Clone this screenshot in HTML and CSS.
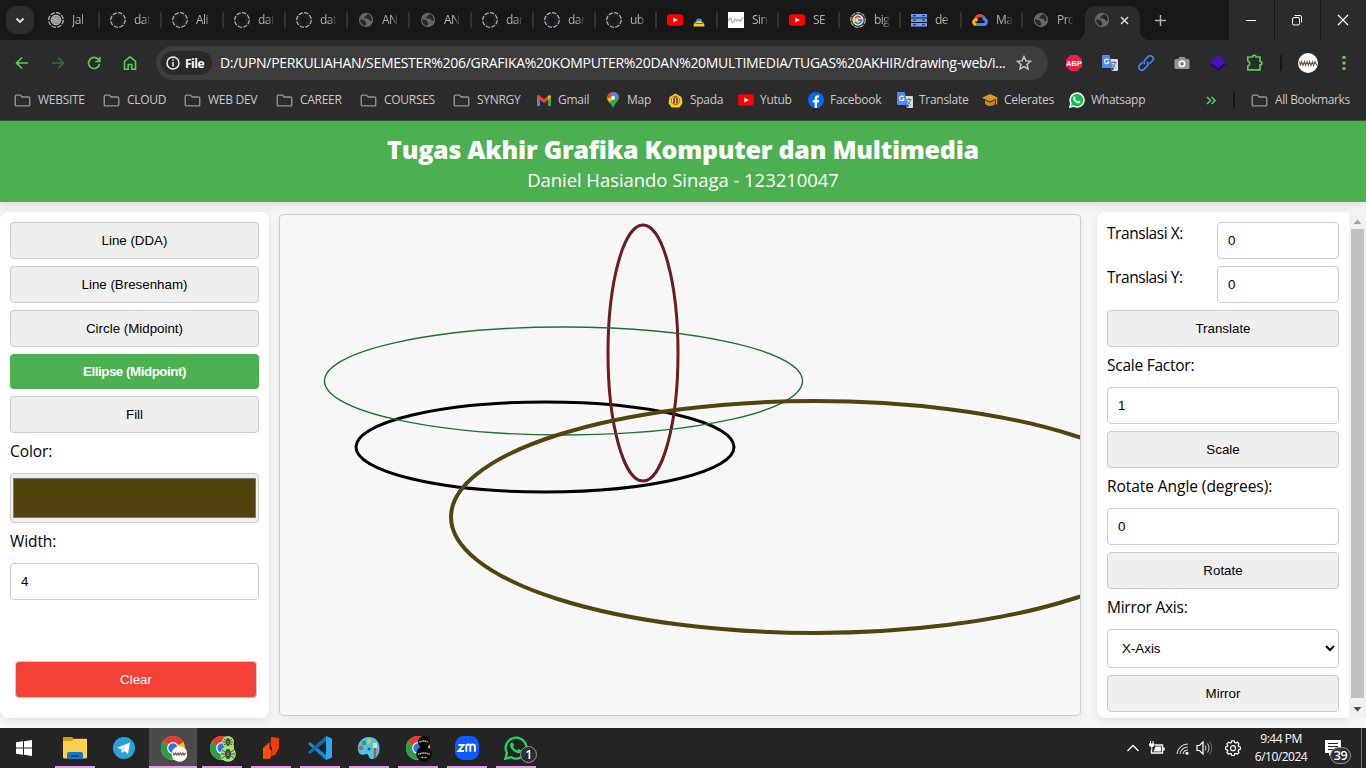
FILE: index.html
```html
<!DOCTYPE html>
<html lang="en">
<head>
<meta charset="utf-8">
<title>Tugas Akhir Grafika Komputer dan Multimedia</title>
<link rel="stylesheet" href="styles.css">
</head>
<body>
<svg class="defs" width="0" height="0">
  <symbol id="github" viewBox="0 0 16 16"><circle cx="8" cy="8" r="7.3" fill="#1d2127" stroke="#a9abae" stroke-width="1.3" stroke-dasharray="4.4 1.3"/><path d="M5 4.5l2 .8h2l2-.8v2.300c1 2-.2 3.600-1.800 4v2.500H6.800v-2.500C5 10.400 4 8.800 5 6.800z" fill="#15171a"/></symbol>
  <symbol id="target" viewBox="0 0 16 16"><circle cx="8" cy="8" r="7.300" fill="#1b1b1b" stroke="#b4b4b4" stroke-width="1.300" stroke-dasharray="4.400 1.300"/><circle cx="8" cy="8" r="4.800" fill="#8c8c8c" stroke="#c4c4c4"/><path d="M5 7l2-2M5 9.500l4.500-4.500M6.500 10.500l4-4M8.500 11l2.500-2.500" stroke="#ccc" stroke-width=".8"/></symbol>
  <symbol id="globe" viewBox="0 0 16 16"><circle cx="8" cy="8" r="7.200" fill="#626569"/><path d="M10.500 2.200C8 2.200 8.500 4 7.200 4.400 5.500 5 6.500 6.300 7.500 6.600c1.600.4 3.300-.2 3.600 1.200.2 1.200 1.500 1 2.700.7C13.700 5.500 12.600 3.200 10.500 2.200zM2 7.500c1.500-.3 3 .2 4.500.9 1.200.6.300 1.800 1.300 2.400.8.500.3 1.700-.3 2.900C4.500 13.500 2.200 11 2 7.500z" fill="#25272a"/></symbol>
  <symbol id="youtube" viewBox="0 0 16 16"><rect y="2.300" width="16" height="11.400" rx="3" fill="#f00"/><path d="M6.300 5.500l4.500 2.500-4.500 2.500z" fill="#fff"/></symbol>
  <symbol id="google" viewBox="0 0 16 16"><circle cx="8" cy="8" r="7.300" fill="#222" stroke="#a9abae" stroke-width="1.200" stroke-dasharray="4.400 1"/><circle cx="8" cy="8" r="5.700" fill="#ddd"/><g fill="none" stroke-width="1.800"><path d="M10.600 5.700A3.500 3.500 0 0 0 5 6.400" stroke="#e94235"/><path d="M5 6.300a3.500 3.500 0 0 0 0 3.400" stroke="#fabb05"/><path d="M5 9.700a3.500 3.500 0 0 0 5.200.9" stroke="#34a853"/><path d="M8 8h3.500c0 1.200-.5 2-1.300 2.600" stroke="#4285f4"/></g></symbol>
  <symbol id="folder" viewBox="0 0 18 14"><path d="M2.500 1.200h4.300l1.900 2h6.800q1.300 0 1.300 1.300v7q0 1.300-1.300 1.300h-13q-1.300 0-1.300-1.300v-9q0-1.300 1.300-1.300z" fill="none" stroke="#929292" stroke-width="1.500"/></symbol>
  <symbol id="translate" viewBox="0 0 16 16"><path d="M7 4h8q1 0 1 1v10q0 1-1 1H10z" fill="#d9dbdd"/><path d="M9.500 7.500h5M12 6v1.500M10 13c2-1.300 3-3 3.300-5M10.500 9c.5 1.500 1.600 3 3.300 4" stroke="#6b7785" fill="none"/><path d="M1 0h6.500l3.500 13H1q-1 0-1-1V1q0-1 1-1z" fill="#4c8bf5"/><path d="M9 13l2 3 1-3z" fill="#2450a8"/><path d="M6.600 5A2.300 2.300 0 1 0 7 7H5" fill="none" stroke="#fff" stroke-width="1.100"/></symbol>
  <symbol id="chrome" viewBox="0 0 24 24"><circle cx="12" cy="12" r="12" fill="#fbc116"/><path d="M12 12L1.600 6A12 12 0 0 1 22.400 6z" fill="#e33b2e"/><path d="M1.600 6A12 12 0 0 0 11 24l5.500-9.500L12 12z" fill="#2b9f48"/><circle cx="12" cy="12" r="5.900" fill="#fff"/><circle cx="12" cy="12" r="4.700" fill="#3474e6"/></symbol>
  <symbol id="whatsapp" viewBox="0 0 24 24"><path d="M1.300 22.700l1.600-5.700A10.400 10.400 0 1 1 7 21.200z" fill="var(--disc)" stroke="var(--rim)" stroke-width="2.300"/><path d="M8 6.500c1.300-.3 1.700 2.300 2 2.900l-.9 1.400c1 1.900 2.300 2.900 4 3.600l1.300-1.500c1 .3 2.500 1 2.700 1.500 0 2.400-2 3-3.500 2.700-3.900-1-6.700-4-7.500-7-.3-1.600.7-3.300 1.900-3.600z" fill="var(--phone)"/></symbol>
</svg>

<div class="browser">
  <div class="tabstrip">
    <div class="tab-search"><svg width="10" height="7" viewBox="0 0 10 7"><path d="M1.500 1.500L5 5l3.500-3.500" fill="none" stroke="#e3e3e3" stroke-width="1.800"/></svg></div>
    <div class="tabs">
      <div class="tab"><svg class="fav"><use href="#target"/></svg><span>Jal</span></div>
      <div class="tab"><svg class="fav"><use href="#github"/></svg><span>dat</span></div>
      <div class="tab"><svg class="fav"><use href="#github"/></svg><span>Ali</span></div>
      <div class="tab"><svg class="fav"><use href="#github"/></svg><span>dat</span></div>
      <div class="tab"><svg class="fav"><use href="#github"/></svg><span>dat</span></div>
      <div class="tab"><svg class="fav"><use href="#globe"/></svg><span>AN</span></div>
      <div class="tab"><svg class="fav"><use href="#globe"/></svg><span>AN</span></div>
      <div class="tab"><svg class="fav"><use href="#github"/></svg><span>dar</span></div>
      <div class="tab"><svg class="fav"><use href="#github"/></svg><span>dar</span></div>
      <div class="tab narrow"><svg class="fav"><use href="#github"/></svg><span>ub</span></div>
      <div class="tab narrow"><svg class="fav"><use href="#youtube"/></svg><svg class="taco" width="12" height="9" viewBox="0 0 12 9"><path d="M3 3Q3 .5 6 .5T9 3z" fill="#28a0dc"/><path d="M.5 8.500Q.5 3 6 3t5.500 5.500z" fill="#f6c945"/><path d="M2 5.500h8" stroke="#2c7c90"/></svg></div>
      <div class="tab narrow"><svg class="fav" viewBox="0 0 16 16"><path fill="#fff" d="M0 0h16v16H0z"/><path d="M.5 9l1-2.500Q3 5 3.500 8.500T6 9.500L7.500 7 9 9l2-1.500 1.500 1.500L15 5.500" fill="none" stroke="#c99" stroke-width="1.200"/></svg><span>Sin</span></div>
      <div class="tab narrow"><svg class="fav"><use href="#youtube"/></svg><span>SE</span></div>
      <div class="tab narrow"><svg class="fav"><use href="#google"/></svg><span>big</span></div>
      <div class="tab narrow"><svg class="fav" viewBox="0 0 16 16"><g fill="#6d9bf5"><path d="M0 2h16v3.500H0zM0 6.500h16V10H0zM0 11h16v3.500H0z"/></g><path d="M2 3.700h3M11 3.700h3M2 8.200h3M11 8.200h3M2 12.700h3M11 12.700h3" stroke="#1e3c80" stroke-width="1.300"/></svg><span>de</span></div>
      <div class="tab narrow"><svg class="fav" viewBox="0 0 16 16"><g fill="none" stroke-width="3"><path d="M3.500 7A4.600 4.600 0 0 1 11 4.800" stroke="#ea4335"/><path d="M11 4.800c1.300 1 1.300 2.400 1.300 2.400 3 .6 2.500 5.300-.6 5.300H8" stroke="#4285f4"/><path d="M8 12.500H4.500" stroke="#34a853"/><path d="M4.500 12.500C1 12.300.8 8.500 3.500 7.600l2 .8" stroke="#fbbc05"/></g></svg><span>Ma</span></div>
      <div class="tab narrow last"><svg class="fav"><use href="#globe"/></svg><span>Pro</span></div>
      <div class="tab active"><svg class="fav"><use href="#globe"/></svg><svg width="9" height="9" viewBox="0 0 9 9"><path d="M1 1l7 7M8 1L1 8" stroke="#d8d8d8" stroke-width="1.600"/></svg></div>
    </div>
    <svg class="plus" width="11" height="11" viewBox="0 0 11 11"><path d="M5.500 0v11M0 5.500h11" stroke="#b0b0b0" stroke-width="1.500"/></svg>
    <div class="window-buttons">
      <div><svg width="12" height="12" viewBox="0 0 12 12"><path d="M1 6.500h10" stroke="#fff"/></svg></div>
      <div><svg width="12" height="12" viewBox="0 0 12 12"><g fill="none" stroke="#fff"><rect x="1.500" y="3.500" width="7" height="7.500" rx="1.500"/><path d="M3.500 1.500H9q1.500 0 1.500 1.500v5.500"/></g></svg></div>
      <div><svg width="12" height="12" viewBox="0 0 12 12"><path d="M1 1l10 10M11 1L1 11" stroke="#fff" stroke-width="1.200"/></svg></div>
    </div>
  </div>

  <div class="toolbar">
    <div class="nav">
      <svg width="14" height="14" viewBox="0 0 14 14"><path d="M13 7H2M7 1.500L1.500 7 7 12.500" fill="none" stroke="#4fd14f" stroke-width="1.600"/></svg>
      <svg width="14" height="14" viewBox="0 0 14 14"><path d="M1 7h11M7 1.500L12.500 7 7 12.500" fill="none" stroke="#396b39" stroke-width="1.600"/></svg>
      <svg width="14" height="14" viewBox="0 0 14 14"><path d="M12 4.500A5.500 5.500 0 1 0 12.500 8M12.800 1v4.500H8.300" fill="none" stroke="#4fd14f" stroke-width="1.700"/></svg>
      <svg width="14" height="16" viewBox="0 0 14 16"><path d="M1.500 6.300L7 1.800l5.500 4.500v8H8.800V9.500H5.200v4.800H1.500z" fill="none" stroke="#4fd14f" stroke-width="1.600"/></svg>
    </div>
    <div class="omnibox">
      <div class="chip"><svg width="14" height="14" viewBox="0 0 14 14"><circle cx="7" cy="7" r="6" fill="none" stroke="#f0f0f0" stroke-width="1.500"/><path d="M7 6v4.500M7 3.300v1.500" stroke="#f0f0f0" stroke-width="1.500"/></svg><b>File</b></div>
      <span class="url">D:/UPN/PERKULIAHAN/SEMESTER%206/GRAFIKA%20KOMPUTER%20DAN%20MULTIMEDIA/TUGAS%20AKHIR/drawing-web/i...</span>
      <svg class="star" width="16" height="16" viewBox="0 0 16 16"><path d="M8 1.500l1.900 4.400 4.700.4-3.600 3.100 1.100 4.700L8 11.600l-4.100 2.500L5 9.400 1.400 6.300l4.700-.4z" fill="none" stroke="#c7c7c7" stroke-width="1.400"/></svg>
    </div>
    <div class="extensions">
      <svg width="18" height="18" viewBox="0 0 18 18"><path d="M5.500 1h7L17 5.500v7L12.500 17h-7L1 12.500v-7z" fill="#ed1e45"/><text x="9" y="11.600" text-anchor="middle" class="abp">ABP</text></svg>
      <svg width="16" height="16"><use href="#translate"/></svg>
      <svg width="18" height="18" viewBox="0 0 18 18"><g transform="rotate(-45 9 9)" fill="none" stroke="#3d86f5" stroke-width="1.700"><path d="M7 6H3a3 3 0 0 0 0 6h4.500a3 3 0 0 0 3-3"/><path d="M11 12h4a3 3 0 0 0 0-6h-4.500a3 3 0 0 0-3 3"/></g></svg>
      <svg width="16" height="16" viewBox="0 0 16 16"><path d="M5.500 2h5l1.200 2H14q1.500 0 1.500 1.500v7Q15.500 14 14 14H2Q.5 14 .5 12.500v-7Q.5 4 2 4h2.300z" fill="#969696"/><circle cx="8" cy="8.800" r="2.700" fill="#777" stroke="#fff" stroke-width="1.700"/></svg>
      <svg width="18" height="18" viewBox="0 0 18 18"><path d="M1 11l8-5 8 5-8 6z" fill="#220875"/><path d="M1 8l8-7 8 7-8 6z" fill="#4a0fb5"/></svg>
      <svg width="18" height="18" viewBox="0 0 18 18"><path d="M2.800 3h4.700c0-2.300 3.500-2.300 3.500 0h4v4.500c2.600 0 2.600 3.300 0 3.300v5H2.800v-3.600c2.600-1 2.600-4.200 0-5.200z" fill="none" stroke="#4fd14f" stroke-width="1.700"/></svg>
    </div>
    <i class="divider"></i>
    <svg class="avatar" width="20" height="20" viewBox="0 0 20 20"><circle cx="10" cy="10" r="10" fill="#fff"/><path d="M1.500 8.500l1 4 1-4 1.500 4 1.500-4 1 4 1.500-4 1.500 4 1-4 1.500 4 1.500-4 1 4 1.500-4 2 4M1.500 10.500h17" fill="none" stroke="#6c5b50" stroke-width="1.100"/></svg>
    <svg class="dots" width="4" height="14" viewBox="0 0 4 14"><path d="M.5 0h3v3h-3zM.5 5.500h3v3h-3zM.5 11h3v3h-3z" fill="#4fd14f"/></svg>
  </div>

  <div class="bookmarks">
    <div class="mark"><svg class="folder"><use href="#folder"/></svg><span>WEBSITE</span></div>
    <div class="mark"><svg class="folder"><use href="#folder"/></svg><span>CLOUD</span></div>
    <div class="mark"><svg class="folder"><use href="#folder"/></svg><span>WEB DEV</span></div>
    <div class="mark"><svg class="folder"><use href="#folder"/></svg><span>CAREER</span></div>
    <div class="mark"><svg class="folder"><use href="#folder"/></svg><span>COURSES</span></div>
    <div class="mark"><svg class="folder"><use href="#folder"/></svg><span>SYNRGY</span></div>
    <div class="mark"><svg width="14" height="11" viewBox="0 0 14 11"><path d="M0 1h3v10H1q-1 0-1-1z" fill="#4285f4"/><path d="M11 1h3v9q0 1-1 1h-2z" fill="#34a853"/><path d="M0 1.500C0 0 1.500-.3 2.500.5L7 4l4.500-3.500v4L7 8 0 2.800z" fill="#ea4335"/><path d="M11 1c1-1.300 3-1 3 .8L11 5z" fill="#fbbc04"/></svg><span>Gmail</span></div>
    <div class="mark pinned"><svg width="12" height="16" viewBox="0 0 12 16"><path d="M6 0a5.800 5.800 0 0 0-5.800 6C.3 9.500 4 11 6 16c2-5 5.700-6.500 5.800-10A5.800 5.800 0 0 0 6 0z" fill="#34a853"/><path d="M6 0C3 0 .2 2.300.2 6L6 6z" fill="#ea4335"/><path d="M6 0c3 0 5.500 2 5.800 5L6 6 4 4z" fill="#4285f4"/><path d="M.2 6c.2 1.700 1.200 3 2.300 4.200L8 6H3z" fill="#fbbc04"/><circle cx="6" cy="5.800" r="2" fill="#fff"/></svg><span>Map</span></div>
    <div class="mark"><svg width="15" height="15" viewBox="0 0 15 15"><path d="M7.500.5l6 3.500 1 6-3 4.500h-8L.5 10l1-6z" fill="#e5d421"/><circle cx="7.500" cy="7.500" r="4.200" fill="#fbe98c" stroke="#9b6b20"/><path d="M7.500 3.500l2.500 2v5H5v-5z" fill="#c52b24"/><path d="M7.500 5v5" stroke="#fff"/></svg><span>Spada</span></div>
    <div class="mark wide"><svg width="16" height="16"><use href="#youtube"/></svg><span>Yutub</span></div>
    <div class="mark wide"><svg width="16" height="16" viewBox="0 0 16 16"><circle cx="8" cy="8" r="8" fill="#0866ff"/><path d="M6.700 16v-5.500H4.800V8h1.900V6.500c0-2.500 1.500-3.600 4.300-3.200v2.200C9.500 5.400 9.100 5.700 9.100 6.800V8h2l-.4 2.500H9.100V16z" fill="#fff"/></svg><span>Facebook</span></div>
    <div class="mark wide"><svg width="16" height="16"><use href="#translate"/></svg><span>Translate</span></div>
    <div class="mark wide"><svg width="16" height="14" viewBox="0 0 16 14"><path d="M8 1l8 3.800-8 3.700L0 4.800z" fill="#d9982f"/><path d="M3 7v4c2 2.600 8 2.600 10 0V7L8 9.500z" fill="#c4841f"/><path d="M14.500 5v6.500" stroke="#d9982f" stroke-width="1.300"/></svg><span>Celerates</span></div>
    <div class="mark wide"><svg class="wa-full" width="16" height="16"><use href="#whatsapp"/></svg><span>Whatsapp</span></div>
    <div class="mark"><svg width="10" height="9" viewBox="0 0 10 9"><path d="M1 1l3.500 3.500L1 8M5.500 1L9 4.500 5.500 8" fill="none" stroke="#4fd14f" stroke-width="1.600"/></svg></div>
    <div class="mark"><i class="divider"></i></div>
    <div class="mark"><svg class="folder"><use href="#folder"/></svg><span class="all">All Bookmarks</span></div>
  </div>
</div>

<main class="page">
  <header class="banner">
    <h1>Tugas Akhir Grafika Komputer dan Multimedia</h1>
    <p>Daniel Hasiando Sinaga - 123210047</p>
  </header>
  <div class="workspace">
    <aside class="panel tools">
      <button>Line (DDA)</button>
      <button>Line (Bresenham)</button>
      <button>Circle (Midpoint)</button>
      <button class="selected">Ellipse (Midpoint)</button>
      <button>Fill</button>
      <label>Color:</label>
      <div class="color"><i></i></div>
      <label>Width:</label>
      <input value="4">
      <button class="clear">Clear</button>
    </aside>
    <section class="canvas">
      <svg width="800" height="500" viewBox="280 215 800 500" fill="none">
        <ellipse cx="545" cy="447" rx="189" ry="45" stroke="#000" stroke-width="3"/>
        <ellipse cx="643" cy="353" rx="35" ry="128" stroke="#6b1d1f" stroke-width="3"/>
        <ellipse cx="563.500" cy="381" rx="239" ry="54" stroke="#1d7030" stroke-width="1.400"/>
        <ellipse cx="815" cy="517" rx="364" ry="116" stroke="#52440e" stroke-width="4"/>
      </svg>
    </section>
    <aside class="panel transforms">
      <div class="row"><label>Translasi X:</label><input value="0"></div>
      <div class="row"><label>Translasi Y:</label><input value="0"></div>
      <button>Translate</button>
      <label>Scale Factor:</label>
      <input value="1">
      <button>Scale</button>
      <label class="long">Rotate Angle (degrees):</label>
      <input value="0">
      <button>Rotate</button>
      <label>Mirror Axis:</label>
      <select><option>X-Axis</option></select>
      <button>Mirror</button>
    </aside>
    <div class="scrollbar">
      <svg width="9" height="5" viewBox="0 0 9 5"><path d="M.5 5l4-4.500 4 4.500z" fill="#a3a3a3"/></svg>
      <i></i>
      <svg width="9" height="5" viewBox="0 0 9 5"><path d="M.5 0l4 4.500 4-4.500z" fill="#505050"/></svg>
    </div>
  </div>
</main>

<footer class="taskbar">
  <div class="start"><svg width="16" height="16" viewBox="0 0 16 16"><path d="M0 2.300L7 1.300v6.200H0zM8 1.200L16 0v7.500H8zM0 8.500h7v6.200l-7-1zM8 8.500h8V16l-8-1.200z" fill="#fff"/></svg></div>
  <div class="apps">
    <div class="app open"><svg width="24" height="22" viewBox="0 0 24 22"><path d="M0 0h9l2 2-1 3H0z" fill="#d9940a"/><path d="M0 4l9-.2 2-2h13V20q0 1.500-1.500 1.500h-21Q0 21.500 0 20z" fill="#ffd04d"/><path d="M4 22v-5q0-2 2-2h12q2 0 2 2v5z" fill="#1678c5"/><path d="M8 19h8" stroke="#0d5091" stroke-width="2"/></svg></div>
    <div class="app"><svg width="22" height="22" viewBox="0 0 22 22"><circle cx="11" cy="11" r="11" fill="#2ca0dc"/><path d="M4 10.800L17 5.500 15 17l-4-3-2 2-.7-3.800z" fill="#fff"/><path d="M8.300 12.200L15 7.500l-5 5.500L9 16z" fill="#bfdff0"/></svg></div>
    <div class="app open current"><svg class="badged" width="26" height="26" viewBox="0 0 26 26"><use href="#chrome" width="24" height="24"/><circle cx="18.500" cy="18" r="7.800" fill="#fff"/><path d="M12 16.500l1 3 1.500-3 1 3 1.500-3 1 3 1.500-3 1 3 1.500-3 1 3 2-3M12 18h13" fill="none" stroke="#66564c" stroke-width=".9"/></svg></div>
    <div class="app open"><svg class="badged" width="26" height="26" viewBox="0 0 26 26"><use href="#chrome" width="24" height="24"/><circle cx="18" cy="6" r="6" fill="#a5df82"/><circle cx="18" cy="18" r="7.800" fill="#a5df82"/><g stroke="#253826" fill="none" stroke-width=".8"><path d="M14 3l8 6M22 3l-8 6M13 6h10M12 14l12 8M24 14l-12 8M11 18h14"/></g><ellipse cx="18" cy="6" rx="2" ry="4" fill="#245b3b"/><ellipse cx="18" cy="18" rx="2.800" ry="5" fill="#245b3b"/><path d="M18 5v3M18 16v4" stroke="#d45151" stroke-width="1.500"/></svg></div>
    <div class="app open"><svg width="18" height="24" viewBox="0 0 18 24"><path d="M9 1l8 1v10l-4 7-3 1V12L8.500 9z" fill="#f23c08"/><path d="M7.500 6v7l2 1.500V20l-2 3H1V12z" fill="#ff4b10"/></svg></div>
    <div class="app open"><svg width="24" height="24" viewBox="0 0 24 24"><path d="M0 8l2-2 16 13v5z" fill="#168ad4"/><path d="M0 16l2 2L18 5V0z" fill="#0c6eb8"/><path d="M18 0l6 2.500v19L18 24z" fill="#2aa6f4"/></svg></div>
    <div class="app open"><svg width="24" height="24" viewBox="0 0 24 24"><path d="M12 1C5 1 0 7 1 14c1 6 6 5 8 4 3-1 2 5 6 5 5 0 8-6 7.500-12C22 5 18 1 12 1z" fill="#4cc3f0"/><circle cx="4" cy="12" r="2.200" fill="#e65032"/><circle cx="7" cy="7" r="2.200" fill="#3b9d42"/><circle cx="12" cy="5" r="2.200" fill="#f5c51d"/><circle cx="12" cy="13" r="1.500" fill="#17638c"/><path d="M18 12v10" stroke="#a5622a" stroke-width="2.500"/><path d="M16 7h4v5h-4z" fill="#ead6b1"/></svg></div>
    <div class="app open"><svg class="badged" width="26" height="26" viewBox="0 0 26 26"><use href="#chrome" width="24" height="24"/><circle cx="18" cy="6" r="6" fill="#080808"/><circle cx="18" cy="18" r="7.800" fill="#080808"/><path d="M13.500 6q4.500-2 9 0M12 18.500q6-3 12 0M15.500 21.500h5" fill="none" stroke="#c8c8c8" stroke-width="1.400" stroke-dasharray="1.300 .5"/></svg></div>
    <div class="app open"><svg width="24" height="24" viewBox="0 0 24 24"><rect width="24" height="24" rx="8.500" fill="#0b5cff"/><path d="M3.500 9h5l-5 6h5.500M11.300 15.800V10q0-1.500 2-1.500t2 1.500v5.800M15.300 10q0-1.500 2.300-1.500t2.300 1.500v5.800" fill="none" stroke="#fff" stroke-width="1.900"/></svg></div>
    <div class="app open"><svg class="wa-line" width="24" height="24"><use href="#whatsapp"/></svg><span class="count one">1</span></div>
  </div>
  <div class="tray">
    <svg width="12" height="8" viewBox="0 0 12 8"><path d="M.5 7L6 1.500 11.500 7" fill="none" stroke="#fff" stroke-width="1.300"/></svg>
    <svg width="17" height="14" viewBox="0 0 17 14"><path d="M7 4h7.500v8h-11V9M16 6.500v3" fill="none" stroke="#fff" stroke-width="1.400"/><path d="M7.500 5.500H13v5H5.500z" fill="#fff"/><path d="M2.500 0v3M5 0v3" stroke="#fff"/><path d="M1 2.500h5.500v1.800q0 1.700-2.700 1.700T1 4.300zM3.300 6h1v3h-1z" fill="#fff"/></svg>
    <svg width="13" height="13" viewBox="0 0 13 13"><g fill="none" stroke="#d5d5d5" stroke-width="1.100"><path d="M1 12A11 11 0 0 1 12 2"/><path d="M4 12a8 8 0 0 1 8-7"/><path d="M7 12a5 5 0 0 1 5-4"/></g><circle cx="11" cy="11.300" r="1.500" fill="#fff"/></svg>
    <svg width="17" height="16" viewBox="0 0 17 16"><path d="M1 5.500h2.500L7 2v12l-3.500-3.500H1z" fill="none" stroke="#fff" stroke-width="1.200"/><path d="M9 5.500q1.800 2.500 0 5M11.500 3.500q3 4.500 0 9" fill="none" stroke="#bbb" stroke-width="1.100"/><path d="M13.800 1.500q4 6.500 0 13" fill="none" stroke="#666"/></svg>
    <svg width="16" height="16" viewBox="0 0 16 16"><path d="M6.700.8h2.600l.5 1.900 1.200.5 1.700-1 1.900 1.900-1 1.700.5 1.200 1.900.5v2.600l-1.900.5-.5 1.200 1 1.700-1.900 1.900-1.700-1-1.200.5-.5 1.900H6.700l-.5-1.900-1.200-.5-1.700 1-1.900-1.900 1-1.700-.5-1.200L0 10.100V7.500L1.900 7l.5-1.200-1-1.700 1.900-1.900 1.700 1 1.200-.5z" transform="translate(.6 .1) scale(.92)" fill="none" stroke="#fff" stroke-width="1.300"/><circle cx="8" cy="8.200" r="2.500" fill="none" stroke="#fff" stroke-width="1.200"/></svg>
    <div class="clock"><span>9:44 PM</span><span>6/10/2024</span></div>
    <div class="notice"><svg width="16" height="16" viewBox="0 0 16 16"><path d="M0 0h16v13H7l-3 3v-3H0z" fill="#fff"/><path d="M3 3.500h10M3 6.500h10M3 9.500h6" stroke="#222" stroke-width="1.200"/></svg><span class="count many">39</span></div>
  </div>
</footer>
</body>
</html>
```
FILE: styles.css
```css
* { box-sizing: border-box; }
body { margin: 0; width: 1366px; height: 768px; overflow: hidden; display: flex; flex-direction: column; background: #f7f7f7; font-family: "Open Sans", "Noto Sans", sans-serif; color: #000; }
svg { display: block; flex: none; }
.defs { position: absolute; }

/* Browser frame */
.browser { height: 121px; flex: none; background: #2b2b2b; border-bottom: 1px solid #3a523b; color: #c7c7c7; }
.tabstrip { height: 40px; display: flex; background: #181818; }
.tab-search { width: 28px; height: 28px; margin: 6px 3px 0 6px; border-radius: 10px; background: #2d2d2d; display: flex; align-items: center; justify-content: center; }
.tabs { display: flex; }
.tab { width: 62px; display: flex; align-items: center; padding-left: 11px; position: relative; }
.tab.narrow { width: 61px; }
.tab:not(.last):not(.active)::after { content: ""; position: absolute; right: -1px; top: 12px; width: 2px; height: 16px; background: #333; }
.fav { width: 16px; height: 16px; }
.tab span { width: 17px; margin-left: 8px; white-space: nowrap; font-size: 12px; line-height: 18px; color: #b0b0b0; letter-spacing: -.5px; -webkit-mask-image: linear-gradient(90deg, #000 55%, transparent); mask-image: linear-gradient(90deg, #000 55%, transparent); }
.taco { margin: 4px 0 0 10px; }
.tab.active { width: 55px; height: 34px; margin: 6px 0 0 2px; padding-left: 9px; gap: 10px; background: #2b2b2b; border-radius: 10px 10px 0 0; }
.tab.active svg { margin-top: -6px; }
.tab.active::before { content: ""; position: absolute; bottom: 0; left: -10px; width: 75px; height: 10px; background: radial-gradient(circle at 0 0, transparent 10px, #2b2b2b 10.5px) left / 10px 10px no-repeat, radial-gradient(circle at 100% 0, transparent 10px, #2b2b2b 10.5px) right / 10px 10px no-repeat; }
.plus { margin: 15px 0 0 15px; }
.window-buttons { display: flex; gap: 1px; margin-left: auto; }
.window-buttons div { width: 45px; height: 40px; padding-right: 2px; display: flex; align-items: center; justify-content: center; background: #2b2b2b; }

.toolbar { height: 46px; display: flex; align-items: center; }
.nav { width: 156px; display: flex; gap: 22px; padding-left: 15px; }
.nav svg:last-child { margin-top: -1px; }
.omnibox { width: 892px; height: 34px; display: flex; align-items: center; padding: 0 16px 0 5px; border-radius: 17px; background: #3c3c3c; }
.chip { width: 51px; height: 24px; display: flex; align-items: center; gap: 5px; padding-left: 5px; border-radius: 12px; background: #2a2a2a; color: #fff; font-size: 12px; letter-spacing: -.5px; }
.url { margin-left: 8px; width: 788px; font-size: 14px; line-height: 20px; color: #fff; white-space: nowrap; letter-spacing: -.3px; }
.star { margin-left: auto; }
.extensions { display: flex; margin-left: 8px; }
.extensions svg { margin: 0 9px; }
.extensions svg[width="16"] { margin: 1px 10px; }
.abp { font: bold 7.500px "Liberation Sans", sans-serif; fill: #fff; }
.divider { width: 2px; height: 16px; background: #171717; }
.toolbar .divider { margin-left: 8px; }
.avatar { margin-left: 16px; }
.dots { margin-left: 24px; }

.bookmarks { height: 28px; display: grid; align-items: center; padding-left: 14px; grid-template-columns: 89px 81px 92px 84px 93px 84px 70px 61px 70px 70px 89px 85px 87px 137px 27px 18px auto; font-size: 12px; line-height: 18px; white-space: nowrap; letter-spacing: -.28px; }
.mark { display: flex; align-items: center; gap: 7px; }
.mark.wide { gap: 6px; }
.mark.pinned { gap: 8px; }
.folder { width: 17px; height: 13px; }
.all { letter-spacing: -.4px; }
.wa-full { --disc: #0cc143; --rim: #fff; --phone: #fff; }
.wa-line { --disc: #242424; --rim: #25d366; --phone: #25d366; }

/* Page */
.page { height: 607px; flex: none; display: flex; flex-direction: column; }
.banner { height: 81px; flex: none; background: #4caf50; color: #fff; text-align: center; padding-top: 11px; box-shadow: 0 4px 8px rgba(0,0,0,.1); }
.banner h1 { margin: 0 0 1px; font-size: 25px; line-height: 34px; font-weight: 800; letter-spacing: -.24px; }
.banner p { margin: 0; font-size: 18.500px; line-height: 26px; letter-spacing: -.05px; }
.workspace { flex: 1; display: flex; align-items: flex-start; padding-top: 10px; }
.panel { height: 506px; padding: 10px; background: #fff; display: flex; flex-direction: column; gap: 7px; box-shadow: 0 2px 8px rgba(0,0,0,.1); }
.tools { width: 269px; border-radius: 8px; }
.panel button, .panel input, .panel select { flex: none; width: 100%; height: 37px; margin: 0; border: 1px solid #ccc; border-radius: 4px; font: 13.333px "Liberation Sans", Arial, sans-serif; color: #000; }
.panel button { background: #efefef; }
.panel input, .panel select { background: #fff; padding: 0 10px; }
.panel select { height: 39px; }
.panel label { flex: none; height: 26px; font-size: 15.500px; line-height: 22px; letter-spacing: -.25px; }
.tools label { letter-spacing: -.1px; }
.panel .row label { letter-spacing: -.45px; }
.panel .long { letter-spacing: -.06px; }
.panel .selected { height: 35px; border: 0; background: #4caf50; color: #fff; font-weight: bold; letter-spacing: -.45px; }
.color { height: 50px; flex: none; padding: 4px 2px; border: 1px solid #ccc; border-radius: 4px; background: #efefef; }
.color i { display: block; height: 40px; border: 1px solid #777; background: #52440e; }
.panel .clear { width: 242px; margin: auto 0 10px 5px; background: #f44336; color: #fff; }
.canvas { width: 802px; height: 502px; margin: 2px 16px 0 10px; border: 1px solid #ccc; border-radius: 4px; overflow: hidden; box-shadow: 0 2px 8px rgba(0,0,0,.08); }
.transforms { width: 252px; border-radius: 8px 0 0 8px; }
.row { display: flex; justify-content: space-between; }
.panel .row input { width: 122px; }
.scrollbar { width: 17px; height: 506px; display: flex; flex-direction: column; align-items: center; background: #f1f1f1; padding: 7px 0 6px; }
.scrollbar i { flex: 1; width: 13px; margin: 5px 0 9px; background: #c1c1c1; }

/* Taskbar */
.taskbar { height: 40px; flex: none; display: flex; background: #242424; color: #fff; }
.start { width: 48px; margin-right: 3px; display: flex; align-items: center; justify-content: center; }
.apps { display: flex; gap: 1px; }
.app { width: 48px; display: flex; align-items: center; justify-content: center; position: relative; }
.app.open::after { content: ""; position: absolute; left: 4px; right: 4px; bottom: 0; height: 2px; background: #df9fe8; }
.app.current { background: #4b4b4b; }
.app.current::after { left: 0; right: 0; }
.badged { margin: 2px 0 0 1px; }
.count { position: absolute; display: flex; align-items: center; justify-content: center; border: 1px solid #999; background: rgba(45,45,45,.92); border-radius: 9px; font-size: 12.500px; font-weight: 600; line-height: 14px; letter-spacing: -.5px; }
.one { width: 17px; height: 17px; left: 28px; top: 18px; }
.many { width: 21px; height: 17px; left: 5px; top: 7px; }
.tray { flex: 1; display: flex; align-items: center; margin: 0 4px 0 587px; border-right: 1px solid #777; }
.tray > svg:nth-child(2) { margin-left: 9px; margin-right: 1px; }
.tray > svg:nth-child(3) { margin-left: 10px; }
.tray > svg:nth-child(4) { margin-left: 7px; }
.tray > svg:nth-child(5) { margin-left: 12px; }
.clock { width: 70px; margin-left: 5px; display: flex; flex-direction: column; align-items: center; font-size: 12px; line-height: 18px; letter-spacing: -.5px; }
.notice { position: relative; margin-left: 9px; }
```
